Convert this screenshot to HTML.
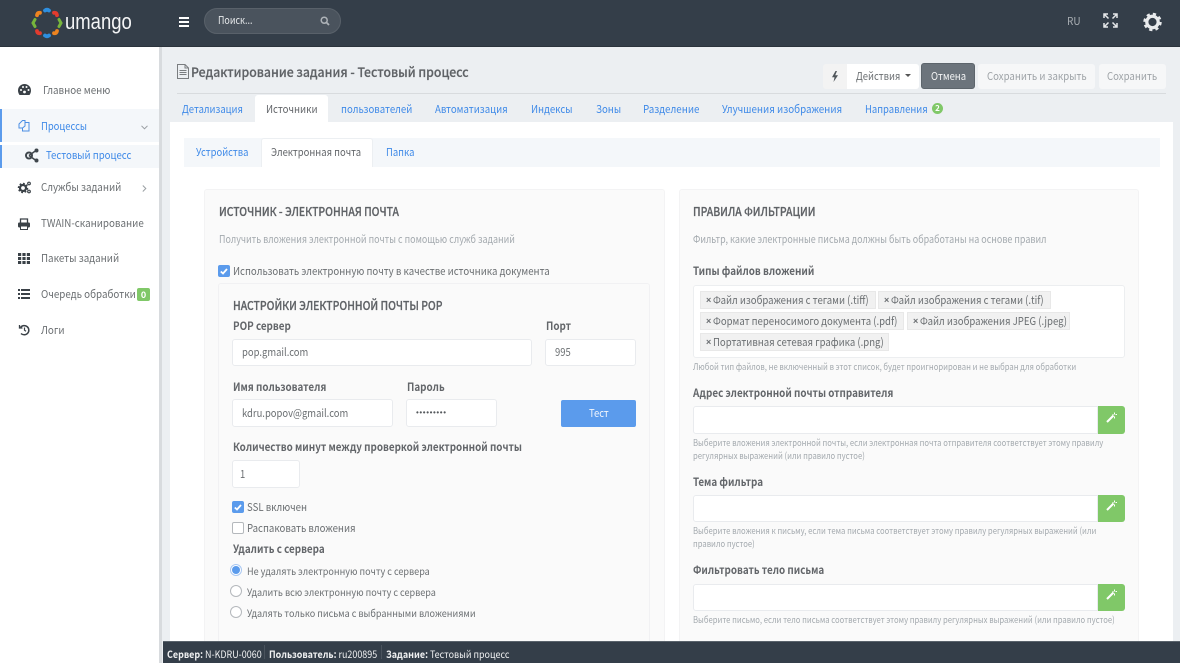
<!DOCTYPE html>
<html lang="ru"><head><meta charset="utf-8"><title>Umango</title>
<style>
html,body{margin:0;padding:0}
body{width:1180px;height:663px;overflow:hidden;position:relative;background:#eceff2;font-family:"Noto Sans CJK SC","Liberation Sans",sans-serif;font-size:11px;color:#6b6f72}
.b{position:absolute;box-sizing:border-box}
.t{position:absolute;white-space:nowrap;line-height:16px;height:16px;transform:scaleX(var(--k,.875));transform-origin:0 50%}
.bl{color:#3f8ae8}
.n{--k:.89}
.st{--k:.86}
.v{--k:.86}
.f{--k:.895;font-size:10px;color:#f0f1f2}
.rt{--k:.908;font-size:10px}
.l{--k:.895;font-weight:700;color:#63666a;font-size:11px}
.h{--k:.865;font-weight:500;font-size:12px;color:#5f6266;-webkit-text-stroke:.25px #5f6266}
.m{--k:.853;color:#a3a9ae;font-size:10.5px}
.s{--k:.853;color:#a3a9ae;font-size:9px;line-height:13px;height:13px}
.i{position:absolute;box-sizing:border-box;background:#fff;border:1px solid #e9ebee;border-radius:3px}
.g{position:absolute;box-sizing:border-box;left:1098px;width:27px;height:27px;background:#80c868;border-radius:0 3px 3px 0}
.tag{position:absolute;box-sizing:border-box;height:18px;background:#f1f1f1;border:1px solid #e8e8e8}
.tt{--k:.87}
.x{position:absolute;font-family:"Liberation Sans",sans-serif;font-size:9px;font-weight:700;line-height:16px;height:16px;color:#6b6f72}
.cb{position:absolute;box-sizing:border-box;width:12px;height:12px;border-radius:2px;background:#5b9bec}
.r{position:absolute;box-sizing:border-box;width:12px;height:12px;border-radius:50%;border:1px solid #b4b8bc;background:#fff}
svg{position:absolute;overflow:visible}
</style></head><body>

<!-- sidebar -->
<div class="b" style="left:0;top:47px;width:159px;height:616px;background:#fff"></div>
<div class="b" style="left:159px;top:47px;width:3px;height:616px;background:#d8dbde"></div>
<div class="b" style="left:0;top:109px;width:159px;height:33px;background:#f4f7fa;border-left:2px solid #5b9bec"></div>
<div class="b" style="left:0;top:145px;width:159px;height:23px;background:#f4f7fa;border-left:2px solid #5b9bec"></div>

<!-- header -->
<div class="b" style="left:0;top:0;width:1180px;height:47px;background:#343e49;border-bottom:1px solid #2b333c"></div>
<svg style="left:31px;top:7px" width="32" height="32" viewBox="0 0 32 32">
<g fill="none" stroke-width="3.800" stroke-linecap="round">
<path d="M14 3.500 Q16 2 18 3.500" stroke="#2e8fe0"/>
<path d="M23 5.800 Q25.600 5.500 26 8.200" stroke="#e23b2e"/>
<path d="M28 12.500 L30 16 L28 19.500" stroke="#77b53c" stroke-width="3"/>
<path d="M26 24 Q25.600 26.600 23 26.200" stroke="#ee8420"/>
<path d="M18 28.500 Q16 30 14 28.500" stroke="#2e8fe0"/>
<path d="M9 26.200 Q6.400 26.600 6 24" stroke="#e23b2e"/>
<path d="M4 19.500 L2 16 L4 12.500" stroke="#77b53c" stroke-width="3"/>
<path d="M6 8.200 Q6.400 5.500 9 5.800" stroke="#ee8420"/>
</g></svg>
<div class="t" style="--k:.84;left:65px;top:10px;line-height:24px;height:24px;font-size:22px;color:#f4f5f6;font-family:'Liberation Sans',sans-serif">umango</div>
<div class="b" style="left:179px;top:17px;width:10px;height:2px;background:#fff"></div>
<div class="b" style="left:179px;top:21px;width:10px;height:2px;background:#fff"></div>
<div class="b" style="left:179px;top:25px;width:10px;height:2px;background:#fff"></div>
<div class="b" style="left:204px;top:8px;width:137px;height:26px;border-radius:13px;background:#4a535d;border:1px solid #59616a"></div>
<div class="t" style="--k:.85;left:218px;top:13px;color:#e8eaec;font-size:10.500px">Поиск...</div>
<svg style="left:320px;top:16px" width="10" height="10" viewBox="0 0 10 10"><circle cx="4.200" cy="4.200" r="3" fill="none" stroke="#aeb3b8" stroke-width="1.500"/><path d="M6.500 6.500 9 9" stroke="#aeb3b8" stroke-width="1.800"/></svg>
<div class="t" style="--k:.95;left:1067px;top:14px;color:#a9aeb3;font-size:10.500px">RU</div>
<svg style="left:1103px;top:13px" width="15" height="15" viewBox="0 0 15 15" fill="none" stroke="#e6e8ea" stroke-width="1.500"><path d="M1 5V1H5M1 1 5.500 5.500M10 1H14V5M14 1 9.500 5.500M1 10V14H5M1 14 5.500 9.500M10 14H14V10M14 14 9.500 9.500"/></svg>
<svg style="left:1143px;top:12px" width="19" height="20" viewBox="0 0 20 20"><circle cx="10" cy="10" r="6" fill="none" stroke="#e9ebed" stroke-width="3.400"/><circle cx="10" cy="10" r="8" fill="none" stroke="#e9ebed" stroke-width="3.400" stroke-dasharray="3.200 3.100"/></svg>

<!-- sidebar items -->
<svg style="left:18px;top:84px" width="13" height="11" viewBox="0 0 13 11"><path d="M6.500 0A6.500 6.500 0 0 0 0 6.500C0 8 .5 9.600 1.500 11H11.500C12.500 9.600 13 8 13 6.500A6.500 6.500 0 0 0 6.500 0Z" fill="#3a4147"/><circle cx="3" cy="6" r="1" fill="#fff"/><circle cx="5" cy="3" r="1" fill="#fff"/><circle cx="8.500" cy="3" r="1" fill="#fff"/><circle cx="10.500" cy="6" r="1" fill="#fff"/><circle cx="6.500" cy="8" r="1.400" fill="#fff"/></svg>
<div class="t n" style="left:43px;top:82px">Главное меню</div>
<svg style="left:18px;top:119px" width="12" height="13" viewBox="0 0 12 13" fill="none" stroke="#4c8fe4"><path d="M1 5 4.500 1.500H7V7L4.500 9H1Z"/><path d="M7 3.500H11V12H4.500V9"/></svg>
<div class="t bl" style="--k:.86;left:41px;top:118px">Процессы</div>
<svg style="left:141px;top:125px" width="7" height="5" viewBox="0 0 7 5" fill="none" stroke="#9a9fa3"><path d="M.5 .8 3.500 3.800 6.500 .8"/></svg>
<svg style="left:25px;top:148px" width="14" height="15" viewBox="0 0 14 15" fill="#3f464c" stroke="#3f464c"><path d="M4 7.500 11 2.500M4 7.500 11 12.500" stroke-width="1.500"/><circle cx="4" cy="7.500" r="3" fill="none" stroke-width="2"/><circle cx="11.500" cy="2.500" r="1.500"/><circle cx="11.500" cy="12.500" r="1.500"/></svg>
<div class="t bl" style="--k:.875;left:46px;top:147px">Тестовый процесс</div>
<svg style="left:18px;top:181px" width="13" height="13" viewBox="0 0 13 13" fill="none" stroke="#3a4147"><circle cx="5" cy="7" r="3" stroke-width="2.200"/><circle cx="5" cy="7" r="4.500" stroke-width="1.500" stroke-dasharray="1.800 1.700"/><circle cx="11" cy="2.500" r="1.300" stroke-width="1.200"/><circle cx="11" cy="10.500" r="1.300" stroke-width="1.200"/></svg>
<div class="t n" style="left:41px;top:179px">Службы заданий</div>
<svg style="left:142px;top:185px" width="5" height="7" viewBox="0 0 5 7" fill="none" stroke="#9a9fa3"><path d="M.8 .5 3.800 3.500 .8 6.500"/></svg>
<svg style="left:18px;top:218px" width="12" height="12" viewBox="0 0 12 12"><path d="M2.500 4.500V1H9.500V4.500" fill="none" stroke="#3a4147" stroke-width="1.300"/><rect x="0" y="4.500" width="12" height="5" rx="1.200" fill="#3a4147"/><rect x="2.500" y="8" width="7" height="3.500" fill="#fff" stroke="#3a4147"/></svg>
<div class="t n" style="left:41px;top:215px">TWAIN-сканирование</div>
<svg style="left:18px;top:253px" width="12" height="11" viewBox="0 0 12 11" fill="#3a4147"><rect width="3.200" height="3"/><rect x="4.400" width="3.200" height="3"/><rect x="8.800" width="3.200" height="3"/><rect y="4" width="3.200" height="3"/><rect x="4.400" y="4" width="3.200" height="3"/><rect x="8.800" y="4" width="3.200" height="3"/><rect y="8" width="3.200" height="3"/><rect x="4.400" y="8" width="3.200" height="3"/><rect x="8.800" y="8" width="3.200" height="3"/></svg>
<div class="t n" style="left:41px;top:250px">Пакеты заданий</div>
<svg style="left:18px;top:289px" width="12" height="10" viewBox="0 0 12 10" fill="#3a4147"><rect width="2" height="2"/><rect x="3" width="9" height="2"/><rect y="4" width="2" height="2"/><rect x="3" y="4" width="9" height="2"/><rect y="8" width="2" height="2"/><rect x="3" y="8" width="9" height="2"/></svg>
<div class="t n" style="left:41px;top:286px">Очередь обработки</div>
<div class="b" style="left:137px;top:288px;width:13px;height:13px;background:#80c868;border-radius:2px;color:#fff;font-size:9px;font-weight:700;text-align:center;line-height:13px">0</div>
<svg style="left:18px;top:324px" width="12" height="12" viewBox="0 0 12 12" fill="none" stroke="#3a4147" stroke-width="1.500"><path d="M2.500 3.500A4.600 4.600 0 1 1 3 9.500"/><path d="M1.500 1V4H4.500" stroke-width="1.300"/><path d="M6.500 3.500V6.200L8 7.200" stroke-width="1.200"/></svg>
<div class="t n" style="left:41px;top:322px">Логи</div>

<!-- title -->
<svg style="left:177px;top:64px" width="12" height="15" viewBox="0 0 12 15" fill="none" stroke="#7a7d80"><path d="M.5 .5H8L11.500 4V14.500H.5Z"/><path d="M8 .5V4H11.500"/><path d="M2.500 6.500H9.500M2.500 8.500H9.500M2.500 10.500H9.500" stroke-width=".9"/></svg>
<div class="t" style="--k:.945;left:191px;top:64px;font-size:13px;font-weight:500;color:#5f6266;-webkit-text-stroke:.2px #5f6266">Редактирование задания - Тестовый процесс</div>
<div class="b" style="left:177px;top:93px;width:989px;height:1px;background:#d8dbde"></div>

<!-- buttons -->
<div class="b" style="left:823px;top:64px;width:25px;height:25px;background:#f3f3f3;border-radius:3px 0 0 3px"></div>
<svg style="left:832px;top:71px" width="6" height="11" viewBox="0 0 6 11"><path d="M3.500 0 0 6.200H2.500L1.500 11 6 4.300H3.200L5 0Z" fill="#50565b"/></svg>
<div class="b" style="left:847px;top:64px;width:72px;height:25px;background:#fff;border-radius:0 3px 3px 0"></div>
<div class="t v" style="left:856px;top:68px">Действия</div>
<div class="b" style="left:905px;top:74px;width:0;height:0;border-left:3.500px solid transparent;border-right:3.500px solid transparent;border-top:3.500px solid #555"></div>
<div class="b" style="left:921px;top:63px;width:54px;height:26px;background:#6c747c;border:1px solid #5d656c;border-radius:3px"></div>
<div class="t v" style="left:931px;top:68px;color:#f4f5f6">Отмена</div>
<div class="b" style="left:978px;top:64px;width:117px;height:25px;background:#f6f7f8;border-radius:3px"></div>
<div class="t" style="left:987px;top:68px;color:#9ea3a7">Сохранить и закрыть</div>
<div class="b" style="left:1099px;top:64px;width:67px;height:25px;background:#f6f7f8;border-radius:3px"></div>
<div class="t" style="left:1107px;top:68px;color:#9ea3a7">Сохранить</div>

<!-- main tabs -->
<div class="b" style="left:170px;top:122px;width:1003px;height:519px;background:#fff"></div>
<div class="b" style="left:255px;top:95px;width:73px;height:27px;background:#fff;border-radius:3px 3px 0 0"></div>
<div class="t bl st" style="left:182px;top:101px">Детализация</div>
<div class="t" style="left:266px;top:101px;color:#63666a">Источники</div>
<div class="t bl" style="left:341px;top:101px">пользователей</div>
<div class="t bl" style="left:435px;top:101px">Автоматизация</div>
<div class="t bl" style="left:531px;top:101px">Индексы</div>
<div class="t bl" style="left:596px;top:101px">Зоны</div>
<div class="t bl n" style="left:643px;top:101px">Разделение</div>
<div class="t bl n" style="left:722px;top:101px">Улучшения изображения</div>
<div class="t bl st" style="left:865px;top:101px">Направления</div>
<div class="b" style="left:932px;top:103px;width:11px;height:11px;border-radius:50%;background:#80c868;color:#fff;font-size:8px;font-weight:700;text-align:center;line-height:11px">2</div>

<!-- sub tabs -->
<div class="b" style="left:184px;top:138px;width:976px;height:29px;background:#f4f7fa"></div>
<div class="b" style="left:261px;top:138px;width:112px;height:29px;background:#fff;border-radius:3px 3px 0 0;border:1px solid #eceff2;border-bottom:0"></div>
<div class="t bl st" style="left:196px;top:144px">Устройства</div>
<div class="t st" style="left:271px;top:144px;color:#63666a">Электронная почта</div>
<div class="t bl st" style="left:386px;top:144px">Папка</div>

<!-- left card -->
<div class="b" style="left:204px;top:189px;width:461px;height:452px;background:#fafafa;border:1px solid #f3f3f4;border-bottom:0;border-radius:3px 3px 0 0"></div>
<div class="t h" style="left:219px;top:204px">ИСТОЧНИК - ЭЛЕКТРОННАЯ ПОЧТА</div>
<div class="t m" style="left:219px;top:232px">Получить вложения электронной почты с помощью служб заданий</div>
<div class="cb" style="left:218px;top:265px"></div>
<svg style="left:220px;top:268px" width="8" height="7" viewBox="0 0 8 7" fill="none" stroke="#fff" stroke-width="1.800"><path d="M.8 3.500 3 5.500 7 1"/></svg>
<div class="t" style="left:233px;top:263px">Использовать электронную почту в качестве источника документа</div>
<div class="b" style="left:218px;top:283px;width:432px;height:358px;background:#fafafa;border:1px solid #f1f1f3;border-bottom:0;border-radius:3px 3px 0 0"></div>
<div class="t h" style="left:233px;top:298px">НАСТРОЙКИ ЭЛЕКТРОННОЙ ПОЧТЫ POP</div>
<div class="t l" style="left:233px;top:318px">POP сервер</div>
<div class="t l" style="left:546px;top:318px">Порт</div>
<div class="i" style="left:232px;top:339px;width:300px;height:27px"></div>
<div class="t v" style="left:242px;top:344px">pop.gmail.com</div>
<div class="i" style="left:545px;top:339px;width:91px;height:27px"></div>
<div class="t v" style="left:555px;top:344px">995</div>
<div class="t l" style="left:233px;top:379px">Имя пользователя</div>
<div class="t l" style="left:407px;top:379px">Пароль</div>
<div class="i" style="left:232px;top:399px;width:161px;height:28px"></div>
<div class="t v" style="left:242px;top:405px">kdru.popov@gmail.com</div>
<div class="i" style="left:406px;top:399px;width:91px;height:28px"></div>
<div class="t" style="--k:1;left:416px;top:405px;font-family:'Liberation Sans',sans-serif;font-size:8px;letter-spacing:.6px;color:#55595d">•••••••••</div>
<div class="b" style="left:561px;top:400px;width:75px;height:27px;background:#5b9bec;border-radius:2px"></div>
<div class="t v" style="left:589px;top:405px;color:#f2f6fc">Тест</div>
<div class="t l" style="left:233px;top:439px">Количество минут между проверкой электронной почты</div>
<div class="i" style="left:232px;top:460px;width:68px;height:28px"></div>
<div class="t v" style="left:240px;top:466px">1</div>
<div class="cb" style="left:232px;top:501px"></div>
<svg style="left:234px;top:504px" width="8" height="7" viewBox="0 0 8 7" fill="none" stroke="#fff" stroke-width="1.800"><path d="M.8 3.500 3 5.500 7 1"/></svg>
<div class="t" style="left:247px;top:499px">SSL включен</div>
<div class="cb" style="left:232px;top:522px;background:#fff;border:1px solid #b4b8bc"></div>
<div class="t" style="left:247px;top:520px">Распаковать вложения</div>
<div class="t l" style="left:233px;top:541px">Удалить с сервера</div>
<div class="r" style="left:230px;top:564px;border:1px solid #a9c8f2"></div>
<div class="b" style="left:232px;top:566px;width:8px;height:8px;border-radius:50%;background:#5b9bec"></div>
<div class="t rt" style="left:247px;top:563px">Не удалять электронную почту с сервера</div>
<div class="r" style="left:230px;top:585px"></div>
<div class="t rt" style="left:247px;top:584px">Удалить всю электронную почту с сервера</div>
<div class="r" style="left:230px;top:606px"></div>
<div class="t rt" style="left:247px;top:605px">Удалять только письма с выбранными вложениями</div>

<!-- right card -->
<div class="b" style="left:679px;top:189px;width:460px;height:452px;background:#fafafa;border:1px solid #f3f3f4;border-bottom:0;border-radius:3px 3px 0 0"></div>
<div class="t h" style="left:693px;top:204px">ПРАВИЛА ФИЛЬТРАЦИИ</div>
<div class="t m" style="left:693px;top:232px">Фильтр, какие электронные письма должны быть обработаны на основе правил</div>
<div class="t l" style="left:693px;top:263px">Типы файлов вложений</div>
<div class="b" style="left:693px;top:285px;width:432px;height:73px;background:#fff;border:1px solid #eceef0;border-radius:3px"></div>
<div class="tag" style="left:700px;top:291px;width:176px"></div>
<div class="x" style="left:706px;top:292px">×</div><div class="t tt" style="left:713px;top:292px">Файл изображения с тегами (.tiff)</div>
<div class="tag" style="left:878px;top:291px;width:173px"></div>
<div class="x" style="left:884px;top:292px">×</div><div class="t tt" style="left:891px;top:292px">Файл изображения с тегами (.tif)</div>
<div class="tag" style="left:700px;top:312px;width:204px"></div>
<div class="x" style="left:706px;top:313px">×</div><div class="t tt" style="left:713px;top:313px">Формат переносимого документа (.pdf)</div>
<div class="tag" style="left:907px;top:312px;width:163px"></div>
<div class="x" style="left:913px;top:313px">×</div><div class="t tt" style="left:920px;top:313px">Файл изображения JPEG (.jpeg)</div>
<div class="tag" style="left:700px;top:333px;width:189px"></div>
<div class="x" style="left:706px;top:334px">×</div><div class="t tt" style="left:713px;top:334px">Портативная сетевая графика (.png)</div>
<div class="t s" style="left:693px;top:360px">Любой тип файлов, не включенный в этот список, будет проигнорирован и не выбран для обработки</div>
<div class="t l" style="left:693px;top:385px">Адрес электронной почты отправителя</div>
<div class="i" style="left:693px;top:406px;width:405px;height:28px;border-radius:3px 0 0 3px"></div>
<div class="g" style="top:406px;height:28px"></div>
<svg style="left:1106px;top:412px" width="11" height="11" viewBox="0 0 11 11"><path d="M1 10 7.500 3.500" stroke="#fff" stroke-width="2"/><path d="M8.500 .5v2M8.500 4.500v2M6.500 2.500h1M9.500 2.500h1.500" stroke="#fff"/></svg>
<div class="t s" style="left:693px;top:436px">Выберите вложения электронной почты, если электронная почта отправителя соответствует этому правилу</div>
<div class="t s" style="left:693px;top:449px">регулярных выражений (или правило пустое)</div>
<div class="t l" style="left:693px;top:474px">Тема фильтра</div>
<div class="i" style="left:693px;top:495px;width:405px;height:27px;border-radius:3px 0 0 3px"></div>
<div class="g" style="top:495px"></div>
<svg style="left:1106px;top:500px" width="11" height="11" viewBox="0 0 11 11"><path d="M1 10 7.500 3.500" stroke="#fff" stroke-width="2"/><path d="M8.500 .5v2M8.500 4.500v2M6.500 2.500h1M9.500 2.500h1.500" stroke="#fff"/></svg>
<div class="t s" style="left:693px;top:524px">Выберите вложения к письму, если тема письма соответствует этому правилу регулярных выражений (или</div>
<div class="t s" style="left:693px;top:537px">правило пустое)</div>
<div class="t l" style="left:693px;top:562px">Фильтровать тело письма</div>
<div class="i" style="left:693px;top:584px;width:405px;height:27px;border-radius:3px 0 0 3px"></div>
<div class="g" style="top:584px"></div>
<svg style="left:1106px;top:589px" width="11" height="11" viewBox="0 0 11 11"><path d="M1 10 7.500 3.500" stroke="#fff" stroke-width="2"/><path d="M8.500 .5v2M8.500 4.500v2M6.500 2.500h1M9.500 2.500h1.500" stroke="#fff"/></svg>
<div class="t s" style="left:693px;top:613px">Выберите письмо, если тело письма соответствует этому правилу регулярных выражений (или правило пустое)</div>

<!-- footer -->
<div class="b" style="left:163px;top:641px;width:1017px;height:22px;background:#343e49;border-top:1px solid #5a636c"></div>
<div class="t f" style="left:167px;top:646px"><b>Сервер:</b> N-KDRU-0060</div>
<div class="b" style="left:264px;top:645px;width:1px;height:14px;background:#4a535d"></div>
<div class="t f" style="left:269px;top:646px"><b>Пользователь:</b> ru200895</div>
<div class="b" style="left:381px;top:645px;width:1px;height:14px;background:#4a535d"></div>
<div class="t f" style="left:386px;top:646px"><b>Задание:</b> Тестовый процесс</div>
</body></html>
